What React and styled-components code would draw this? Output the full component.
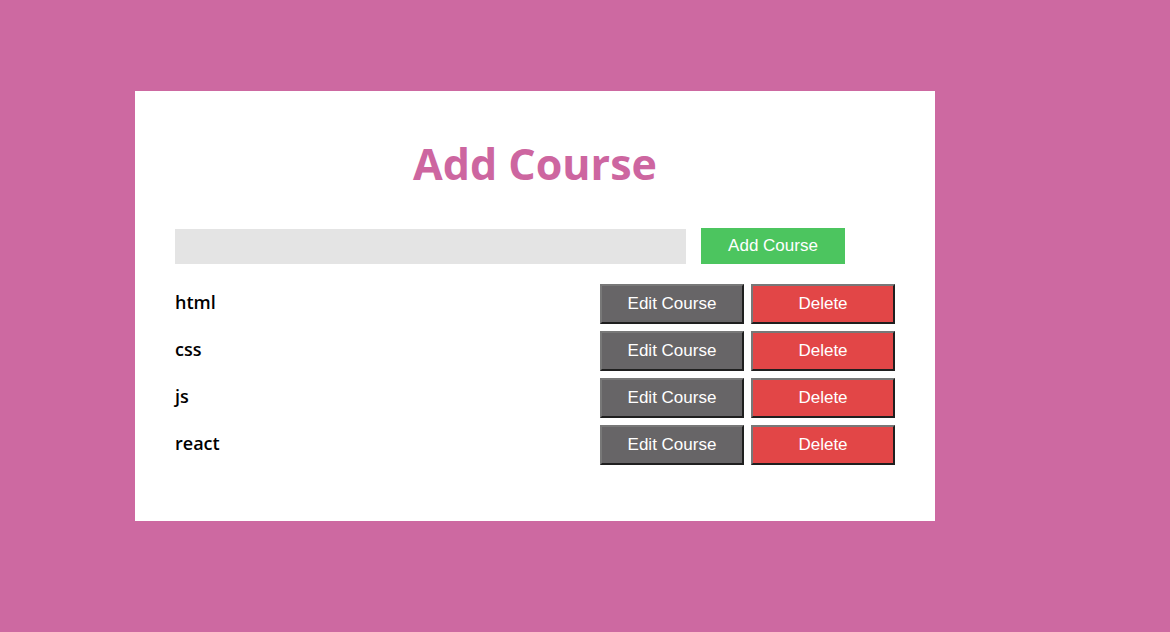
import React from "react";
import styled, { createGlobalStyle } from "styled-components";

const Global = createGlobalStyle`
  html, body { margin: 0; padding: 0; }
  body { background: #cd69a1; min-height: 632px; }
`;

const Card = styled.div`
  box-sizing: border-box;
  margin: 91px 0 0 135px;
  width: 800px;
  height: 430px;
  background: #ffffff;
  padding: 40px 40px;
  display: flex;
  flex-direction: column;
`;

const Title = styled.h1`
  margin: 0 0 31px;
  text-align: center;
  font-family: "Open Sans", "Noto Sans", sans-serif;
  font-weight: 700;
  font-size: 43px;
  line-height: 66px;
  color: #cd66a0;
`;

const AddRow = styled.div`
  display: flex;
  align-items: center;
  gap: 15px;
  margin-bottom: 20px;
`;

const Input = styled.input`
  box-sizing: border-box;
  width: 511px;
  height: 35px;
  border: none;
  background: #e4e4e4;
  outline: none;
  padding: 0 8px;
`;

const AddButton = styled.button`
  box-sizing: border-box;
  width: 144px;
  height: 36px;
  border: none;
  background: #4cc55f;
  color: #ffffff;
  font-family: "Liberation Sans", Arial, sans-serif;
  font-size: 17px;
  cursor: pointer;
`;

const List = styled.div`
  display: flex;
  flex-direction: column;
  gap: 7px;
`;

const Row = styled.div`
  display: flex;
  align-items: center;
  justify-content: space-between;
`;

const Name = styled.span`
  font-family: "Open Sans", "Noto Sans", sans-serif;
  font-weight: 600;
  font-size: 18px;
  color: #000000;
  padding-bottom: 4px;
`;

const Actions = styled.div`
  display: flex;
  gap: 7px;
`;

const ActionButton = styled.button`
  box-sizing: border-box;
  width: 144px;
  height: 40px;
  border-width: 2px;
  border-style: solid;
  border-color: #787878 #1f1f1f #1f1f1f #787878;
  background: ${(p) => (p.$danger ? "#e24647" : "#676567")};
  color: #ffffff;
  font-family: "Liberation Sans", Arial, sans-serif;
  font-size: 17px;
  cursor: pointer;
  padding: 0;
`;

const courses = ["html", "css", "js", "react"];

export default function App() {
  return (
    <>
      <Global />
      <Card>
        <Title>Add Course</Title>
        <AddRow>
          <Input type="text" />
          <AddButton>Add Course</AddButton>
        </AddRow>
        <List>
          {courses.map((c) => (
            <Row key={c}>
              <Name>{c}</Name>
              <Actions>
                <ActionButton>Edit Course</ActionButton>
                <ActionButton $danger>Delete</ActionButton>
              </Actions>
            </Row>
          ))}
        </List>
      </Card>
    </>
  );
}
